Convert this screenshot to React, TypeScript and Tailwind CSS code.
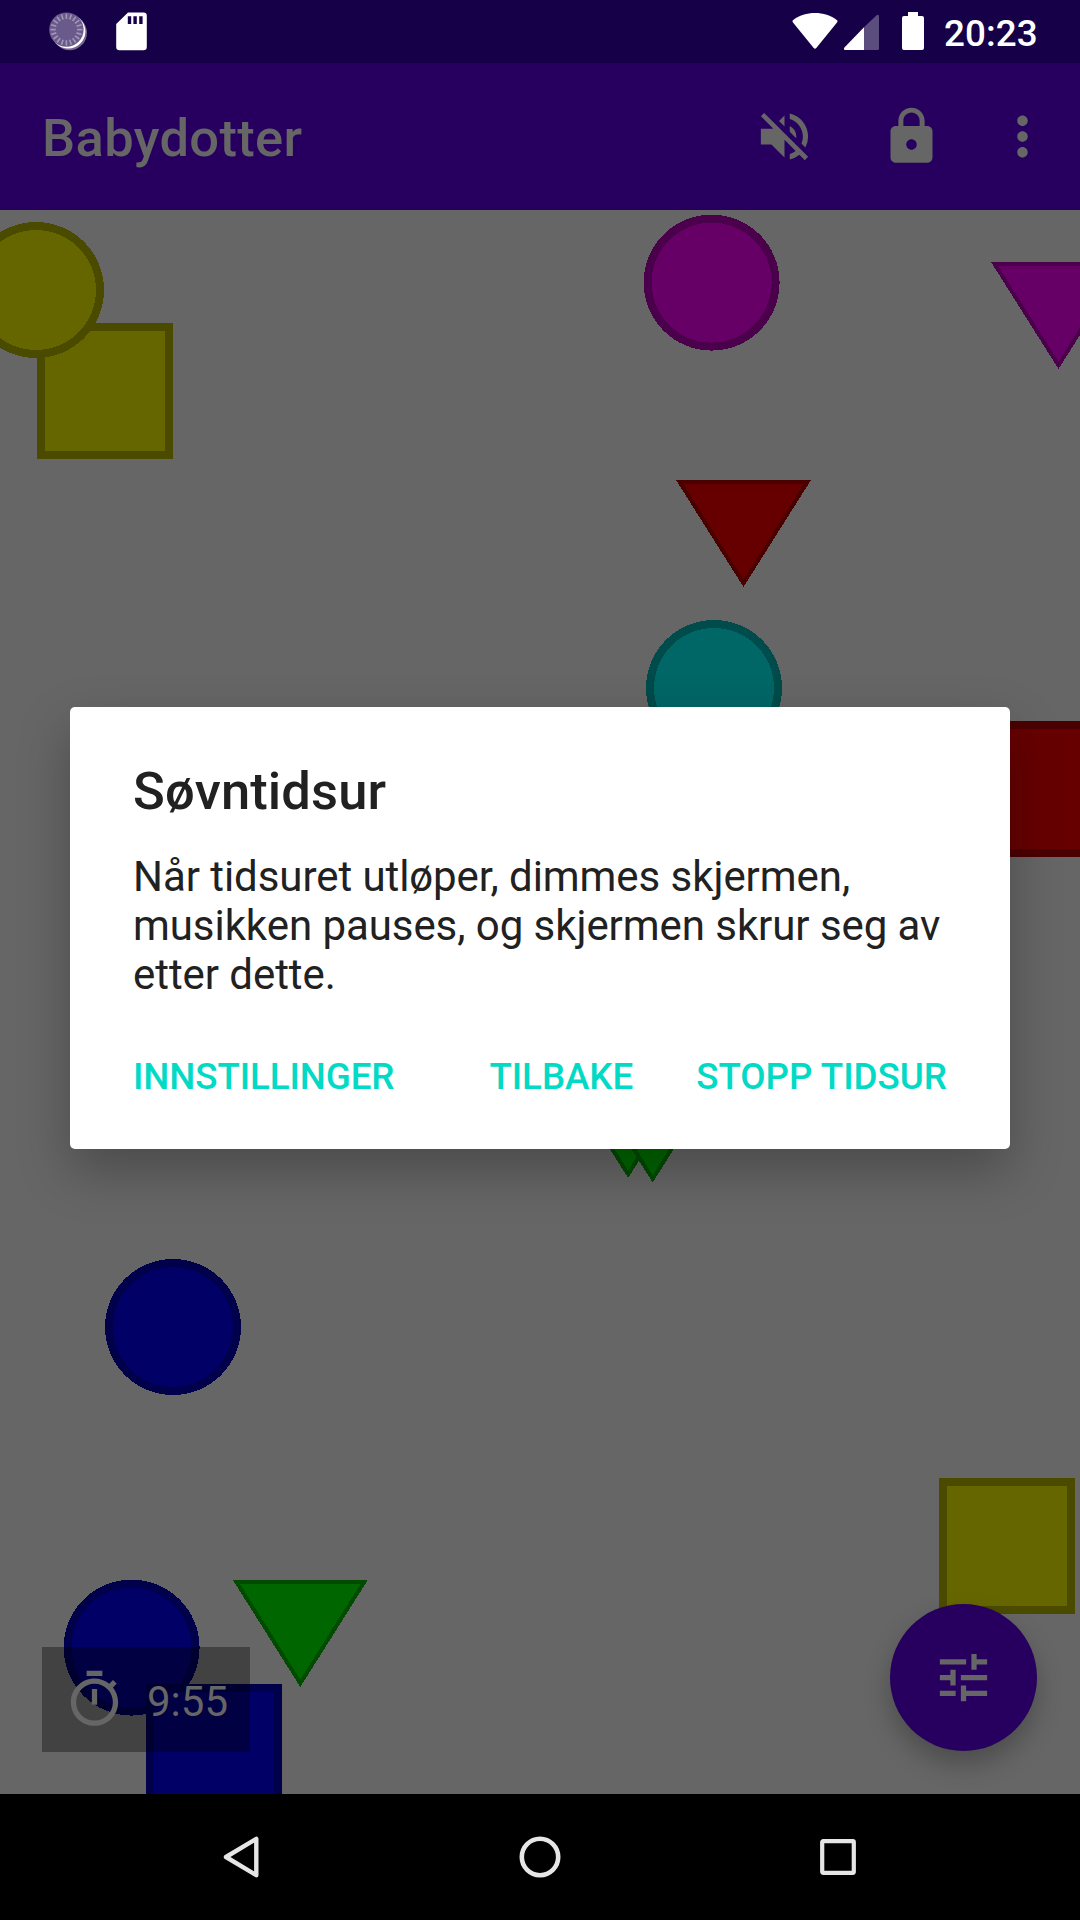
import React from "react";
import { MdLock, MdMoreVert, MdTune, MdVolumeOff } from "react-icons/md";

const FILL = {
  yellow: ["#666600", "#4b4b00"],
  magenta: ["#660066", "#4b004b"],
  red: ["#660000", "#4b0000"],
  cyan: ["#006666", "#004b4b"],
  green: ["#006600", "#004b00"],
  blue: ["#000066", "#00004b"],
} as const;

type Shape = {
  kind: "circle" | "square" | "triangle";
  color: keyof typeof FILL;
  x: number;
  y: number;
};

// Coordinates are relative to the play area.
const SHAPES: Shape[] = [
  { kind: "square", color: "yellow", x: 37, y: 113 },
  { kind: "circle", color: "yellow", x: -32, y: 12 },
  { kind: "circle", color: "magenta", x: 643.6, y: 4.6 },
  { kind: "triangle", color: "magenta", x: 991, y: 52 },
  { kind: "triangle", color: "red", x: 676, y: 270 },
  { kind: "circle", color: "cyan", x: 646, y: 410 },
  { kind: "square", color: "red", x: 970, y: 511 },
  { kind: "triangle", color: "green", x: 560.6, y: 861 },
  { kind: "triangle", color: "green", x: 585.2, y: 865.5 },
  { kind: "circle", color: "blue", x: 105, y: 1049 },
  { kind: "circle", color: "blue", x: 63.6, y: 1369.6 },
  { kind: "square", color: "blue", x: 146, y: 1474 },
  { kind: "triangle", color: "green", x: 232.8, y: 1370 },
  { kind: "square", color: "yellow", x: 939, y: 1268 },
];

function PlayShape({ kind, color, x, y }: Shape) {
  const [fill, edge] = FILL[color];
  return (
    <g transform={`translate(${x} ${y})`}>
      {kind === "circle" && (
        <>
          <circle cx="68" cy="68" r="68" fill={edge} />
          <circle cx="68" cy="68" r="60" fill={fill} />
        </>
      )}
      {kind === "square" && (
        <>
          <rect width="136" height="136" fill={edge} />
          <rect x="8" y="8" width="120" height="120" fill={fill} />
        </>
      )}
      {kind === "triangle" && (
        <>
          <path d="M0 0H135L67.5 107Z" fill={edge} />
          <path d="M7.3 4H127.7L67.5 99.5Z" fill={fill} />
        </>
      )}
    </g>
  );
}

function SpinnerIcon() {
  const ticks = Array.from({ length: 20 }, (_, i) => i * 18);
  return (
    <svg className="h-[42px] w-[42px]" viewBox="0 0 42 42">
      <circle cx="22.6" cy="21.8" r="17.4" fill="#75668f" />
      <circle cx="21.2" cy="20.4" r="17.2" fill="#ffffff" />
      <circle cx="19.4" cy="18.6" r="17.2" fill="#6a5a8b" />
      {ticks.map((a) => (
        <path
          key={a}
          d="M19.4 2.6V8"
          stroke="#a197b6"
          strokeWidth="1.6"
          transform={`rotate(${a} 19.4 18.6)`}
        />
      ))}
    </svg>
  );
}

function StatusBar() {
  return (
    <div className="flex h-[63px] shrink-0 items-start bg-[#160048] text-white">
      <div className="flex pt-[11px] pl-[47px]">
        <SpinnerIcon />
        <svg className="ml-[27px] h-[40px] w-[32px]" viewBox="0 0 32 40">
          <path
            fillRule="evenodd"
            fill="#fff"
            d="M12 1.4H27.5Q30.8 1.4 30.8 4.7V36Q30.8 39.3 27.5 39.3H3.5Q.2 39.3 .2 36V13ZM11.8 5.2V13H15.2V5.2ZM17.4 5.2V13H20.8V5.2ZM23.2 5.2V13H26.6V5.2Z"
          />
        </svg>
      </div>
      <div className="ml-auto flex pt-[11px] pr-[42px]">
        <svg className="h-[40px] w-[46px]" viewBox="0 0 46 40">
          <path
            d="M.6 9.4C7.4 4.3 14.8 2 23 2S38.6 4.3 45.4 9.4Q45.8 10.5 45 11.6L24.3 37Q23 38.6 21.7 37L1 11.6Q.2 10.5 .6 9.4Z"
            fill="#fff"
          />
        </svg>
        <svg className="ml-[6px] h-[40px] w-[36px]" viewBox="0 0 36 40">
          <path d="M20 16.2L32.6 4.3Q35 3 35 5.5V37.5Q35 39 33.5 39H20Z" fill="#5c4d7f" />
          <path d="M20 16.2V39H1Q-.6 38.5 .2 36.7Z" fill="#fff" />
        </svg>
        <svg className="ml-[21px] h-[40px] w-[24px]" viewBox="0 0 24 40">
          <path d="M7 1H17V5H21Q23 5 23 7V37Q23 39 21 39H3Q1 39 1 37V7Q1 5 3 5H7Z" fill="#fff" />
        </svg>
        <span className="mt-[1px] ml-[19px] w-[94px] text-[36.75px] leading-[43px] font-medium tracking-[0.1px]">
          20:23
        </span>
      </div>
    </div>
  );
}

function AppBar() {
  return (
    <div className="flex h-[147px] shrink-0 items-center bg-[#27005f] text-[#666666]">
      <h1 className="pt-[2px] pl-[42px] text-[52.5px] leading-[62px] font-medium tracking-[0.34px]">
        Babydotter
      </h1>
      <div className="ml-auto flex items-center gap-16 pr-[26px] pb-[1px]">
        <MdVolumeOff className="h-[63px] w-[63px]" />
        <MdLock className="h-[63px] w-[63px]" />
        <MdMoreVert className="-ml-[16px] mt-[1px] h-[63px] w-[63px]" />
      </div>
    </div>
  );
}

function TimerIcon() {
  return (
    <svg className="h-[63px] w-[63px]" viewBox="0 0 24 24" fill="currentColor">
      <path d="M15 1H9v2h6V1zm-4 13h2V8h-2v6zm8.03-6.61l1.42-1.42c-.43-.51-.9-.99-1.41-1.41l-1.42 1.42C16.07 4.74 14.12 4 12 4c-4.97 0-9 4.03-9 9s4.02 9 9 9 9-4.03 9-9c0-2.12-.74-4.07-1.97-5.61zM12 20c-3.87 0-7-3.13-7-7s3.13-7 7-7 7 3.13 7 7-3.13 7-7 7z" />
    </svg>
  );
}

function PlayArea() {
  return (
    <div className="relative flex-1 overflow-hidden bg-[#666666] text-[#666666]">
      <svg
        className="absolute inset-0 h-[1584px] w-[1080px]"
        viewBox="0 0 1080 1584"
        shapeRendering="crispEdges"
      >
        {SHAPES.map((s, i) => (
          <PlayShape key={i} {...s} />
        ))}
      </svg>
      <div className="absolute bottom-[42px] left-[42px] flex h-[105px] w-[208px] items-center gap-[21px] bg-black/35 px-[21px]">
        <TimerIcon />
        <span className="pt-[3px] text-[42px] leading-[49px]">9:55</span>
      </div>
      <button className="absolute right-[43px] bottom-[43px] flex h-[147px] w-[147px] items-center justify-center rounded-full bg-[#27005f] shadow-[0_13px_26px_rgba(0,0,0,0.26)]">
        <MdTune className="h-[63px] w-[63px]" />
      </button>
    </div>
  );
}

function NavBar() {
  return (
    <div className="flex h-[126px] shrink-0 items-center justify-between bg-black px-[221px]">
      <svg className="h-[44px] w-[40px]" viewBox="0 0 40 44" fill="none" stroke="#e6e6e6">
        <path d="M35.3 3.8V40.2L5 22Z" strokeWidth="4.4" strokeLinejoin="round" />
      </svg>
      <svg className="h-[44px] w-[44px]" viewBox="0 0 44 44" fill="none" stroke="#e6e6e6">
        <circle cx="22" cy="22" r="18.2" strokeWidth="4.6" />
      </svg>
      <svg className="h-[44px] w-[40px]" viewBox="0 0 40 44" fill="none" stroke="#e6e6e6">
        <rect x="3.2" y="6.2" width="31.6" height="31.6" rx="1" strokeWidth="4.2" />
      </svg>
    </div>
  );
}

function SleepDialog() {
  return (
    <div className="absolute inset-x-0 top-[707px] mx-auto flex h-[442px] w-[940px] flex-col rounded-[5px] bg-white px-[63px] pt-[53px] text-[#212121] shadow-[0_22px_52px_rgba(0,0,0,0.27)]">
      <h2 className="text-[52.5px] leading-[62px] font-medium tracking-[0.12px]">Søvntidsur</h2>
      <p className="mt-[30px] text-[42px] leading-[49px] tracking-[-0.06px]">
        Når tidsuret utløper, dimmes skjermen,
        <br />
        musikken pauses, og skjermen skrur seg av
        <br />
        etter dette.
      </p>
      <div className="mt-[56px] flex text-[36.75px] leading-[43px] font-medium text-[#03dac5]">
        <button className="tracking-[-0.1px]">INNSTILLINGER</button>
        <button className="mr-[63px] ml-auto tracking-[-0.08px]">TILBAKE</button>
        <button>STOPP TIDSUR</button>
      </div>
    </div>
  );
}

export default function App() {
  return (
    <div className="relative flex h-[1920px] w-[1080px] flex-col overflow-hidden font-[Roboto,sans-serif]">
      <StatusBar />
      <AppBar />
      <PlayArea />
      <NavBar />
      <SleepDialog />
    </div>
  );
}
